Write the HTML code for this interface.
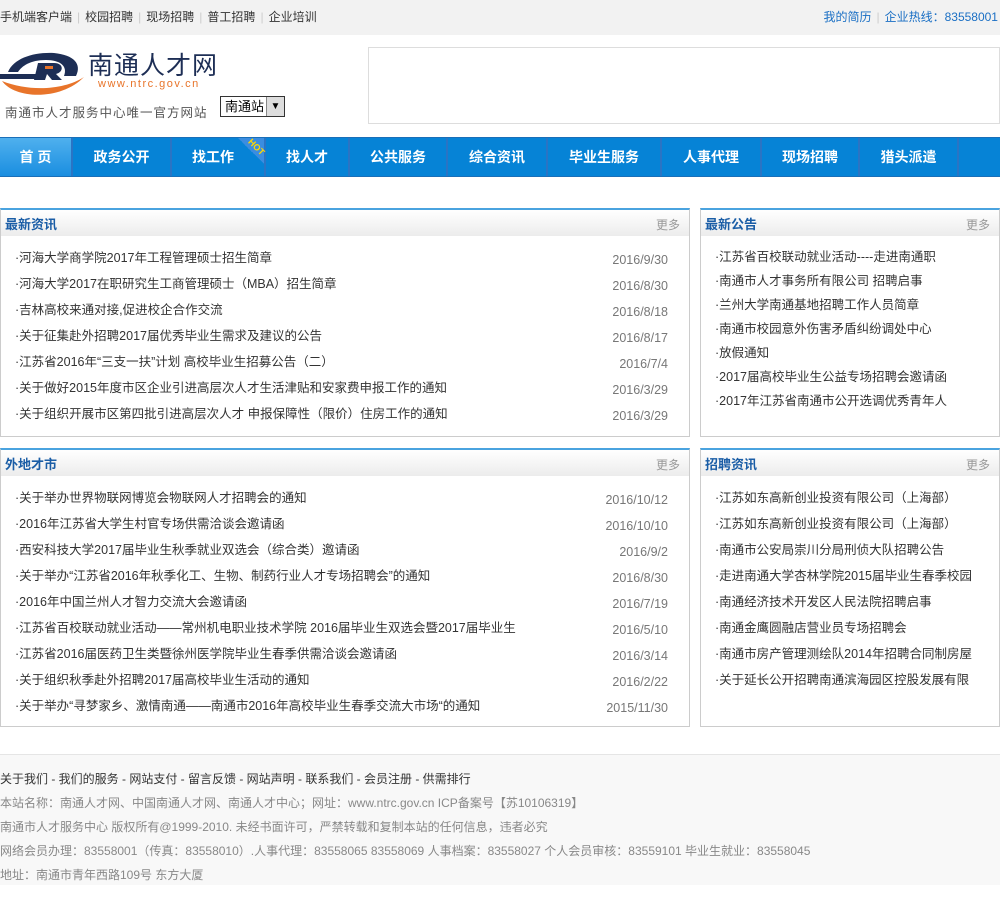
<!DOCTYPE html>
<html><head><meta charset="utf-8"><style>
*{margin:0;padding:0;box-sizing:border-box}
body{width:1000px;height:909px;background:#fff;font-family:"Liberation Sans","Noto Sans CJK SC",sans-serif;font-size:12px;color:#333;position:relative;overflow:hidden}
.a{position:absolute}
.top{left:0;top:0;width:1000px;height:35px;background:#f2f2f2;line-height:34px;font-size:12px;color:#333}
.top .s{color:#ccc;margin:0 5px}
.nav{left:0;top:137px;width:1000px;height:40px;background:#0683d6;border-top:1px solid #1a6fb8;border-bottom:1px solid #1a6fb8}
.nav div{position:absolute;top:0;height:38px;line-height:38px;text-align:center;color:#fff;font-weight:bold;font-size:14px;border-right:2px solid #2a74c4}
.box{border:1px solid #ccc;border-top:2px solid #4aa3df}
.hd{height:26px;background:linear-gradient(#fff,#ececec);line-height:30px;padding-left:4px;font-weight:bold;color:#1a5da6;font-size:13px;position:relative}
.hd span{position:absolute;right:9px;top:0;font-weight:normal;color:#999;font-size:12px}
ul{list-style:none}
li{height:26px;line-height:26px;padding-left:14px;position:relative;white-space:nowrap;overflow:hidden;font-size:12.5px}
li i{position:absolute;right:21px;top:2px;font-style:normal;color:#777}
.foot{left:0;top:754px;width:1000px;height:131px;background:#f8f8f8;border-top:1px solid #e5e5e5;color:#888;font-size:12px}
.foot p{height:24px;line-height:24px}
</style></head><body>
<div class="a top"><span style="margin-left:0">手机端客户端</span><span class="s">|</span>校园招聘<span class="s">|</span>现场招聘<span class="s">|</span>普工招聘<span class="s">|</span>企业培训
<span style="position:absolute;right:2px;top:0"><span style="color:#1a6fc4">我的简历</span><span class="s">|</span><span style="color:#1a6fc4">企业热线：83558001</span></span></div>

<svg class="a" style="left:0;top:50px" width="90" height="50" viewBox="0 0 90 50">
<path d="M8 22 C14 8 34 2 54 3 C74 5 82 14 76 26 L64 26 C68 16 60 10 46 10 C30 10 22 16 18 22 Z" fill="#1d2e55"/>
<path d="M0 24 L38 24 L36 29 L0 29Z" fill="#1d2e55"/>
<path d="M38 13 L54 13 C64 13 64 22 56 24 L62 30 L52 30 L47 24 L45 30 L34 30Z" fill="#1d2e55"/>
<rect x="45" y="16" width="8" height="3" fill="#e8742a"/>
<path d="M2 31 C16 50 62 50 84 27 C64 40 30 42 2 31Z" fill="#e8742a"/>
</svg>
<div class="a" style="left:88px;top:51px;font-size:25px;color:#1d2e55;letter-spacing:1px;line-height:30px">南通人才网</div>
<div class="a" style="left:98px;top:78px;font-size:11px;color:#e8742a;letter-spacing:1.5px">www.ntrc.gov.cn</div>
<div class="a" style="left:5px;top:102px;font-size:12.5px;color:#555;letter-spacing:1px">南通市人才服务中心唯一官方网站</div>
<div class="a" style="left:220px;top:96px;width:65px;height:21px;border:1px solid #333;background:#fff;font-size:13px;line-height:19px;padding-left:4px;color:#000">南通站<span style="position:absolute;right:0;top:0;width:18px;height:19px;background:#ddd;border-left:1px solid #888;text-align:center;font-size:10px">▼</span></div>
<div class="a" style="left:368px;top:47px;width:632px;height:77px;border:1px solid #ddd"></div>

<div class="a nav">
<div style="left:0;width:73px;background:linear-gradient(#4fb0ee,#1a8ee0)">首 页</div>
<div style="left:73px;width:99px">政务公开</div>
<div style="left:172px;width:94px;text-align:left;padding-left:20px">找工作<span style="position:absolute;right:0;top:0;width:26px;height:26px;background:linear-gradient(45deg,#0683d6 50%,#3b8de0 50%)"><b style="position:absolute;right:-2px;top:4px;transform:rotate(45deg);font-size:9px;line-height:10px;color:#ffd700">HOT</b></span></div>
<div style="left:266px;width:84px">找人才</div>
<div style="left:350px;width:98px">公共服务</div>
<div style="left:448px;width:100px">综合资讯</div>
<div style="left:548px;width:114px">毕业生服务</div>
<div style="left:662px;width:100px">人事代理</div>
<div style="left:762px;width:98px">现场招聘</div>
<div style="left:860px;width:99px">猎头派遣</div>
</div>

<div class="a box" style="left:0;top:208px;width:690px;height:229px">
<div class="hd">最新资讯<span>更多</span></div>
<ul style="margin-top:9px">
<li>·河海大学商学院2017年工程管理硕士招生简章<i>2016/9/30</i></li>
<li>·河海大学2017在职研究生工商管理硕士（MBA）招生简章<i>2016/8/30</i></li>
<li>·吉林高校来通对接,促进校企合作交流<i>2016/8/18</i></li>
<li>·关于征集赴外招聘2017届优秀毕业生需求及建议的公告<i>2016/8/17</i></li>
<li>·江苏省2016年“三支一扶”计划 高校毕业生招募公告（二）<i>2016/7/4</i></li>
<li>·关于做好2015年度市区企业引进高层次人才生活津贴和安家费申报工作的通知<i>2016/3/29</i></li>
<li>·关于组织开展市区第四批引进高层次人才 申报保障性（限价）住房工作的通知<i>2016/3/29</i></li>
</ul></div>

<div class="a box" style="left:700px;top:208px;width:300px;height:229px">
<div class="hd">最新公告<span>更多</span></div>
<ul style="margin-top:9px">
<li style="height:24px;line-height:24px">·江苏省百校联动就业活动----走进南通职</li>
<li style="height:24px;line-height:24px">·南通市人才事务所有限公司 招聘启事</li>
<li style="height:24px;line-height:24px">·兰州大学南通基地招聘工作人员简章</li>
<li style="height:24px;line-height:24px">·南通市校园意外伤害矛盾纠纷调处中心</li>
<li style="height:24px;line-height:24px">·放假通知</li>
<li style="height:24px;line-height:24px">·2017届高校毕业生公益专场招聘会邀请函</li>
<li style="height:24px;line-height:24px">·2017年江苏省南通市公开选调优秀青年人</li>
</ul></div>

<div class="a box" style="left:0;top:448px;width:690px;height:279px">
<div class="hd">外地才市<span>更多</span></div>
<ul style="margin-top:9px">
<li>·关于举办世界物联网博览会物联网人才招聘会的通知<i>2016/10/12</i></li>
<li>·2016年江苏省大学生村官专场供需洽谈会邀请函<i>2016/10/10</i></li>
<li>·西安科技大学2017届毕业生秋季就业双选会（综合类）邀请函<i>2016/9/2</i></li>
<li>·关于举办“江苏省2016年秋季化工、生物、制药行业人才专场招聘会”的通知<i>2016/8/30</i></li>
<li>·2016年中国兰州人才智力交流大会邀请函<i>2016/7/19</i></li>
<li>·江苏省百校联动就业活动——常州机电职业技术学院 2016届毕业生双选会暨2017届毕业生<i style="background:#fff;padding-left:40px">2016/5/10</i></li>
<li>·江苏省2016届医药卫生类暨徐州医学院毕业生春季供需洽谈会邀请函<i>2016/3/14</i></li>
<li>·关于组织秋季赴外招聘2017届高校毕业生活动的通知<i>2016/2/22</i></li>
<li>·关于举办“寻梦家乡、激情南通——南通市2016年高校毕业生春季交流大市场“的通知<i>2015/11/30</i></li>
</ul></div>

<div class="a box" style="left:700px;top:448px;width:300px;height:279px">
<div class="hd">招聘资讯<span>更多</span></div>
<ul style="margin-top:9px">
<li>·江苏如东高新创业投资有限公司（上海部）</li>
<li>·江苏如东高新创业投资有限公司（上海部）</li>
<li>·南通市公安局崇川分局刑侦大队招聘公告</li>
<li>·走进南通大学杏林学院2015届毕业生春季校园</li>
<li>·南通经济技术开发区人民法院招聘启事</li>
<li>·南通金鹰圆融店营业员专场招聘会</li>
<li>·南通市房产管理测绘队2014年招聘合同制房屋</li>
<li>·关于延长公开招聘南通滨海园区控股发展有限</li>
</ul></div>

<div class="a foot"><div style="padding-top:12px">
<p style="color:#333">关于我们 - 我们的服务 - 网站支付 - 留言反馈 - 网站声明 - 联系我们 - 会员注册 - 供需排行</p>
<p>本站名称：南通人才网、中国南通人才网、南通人才中心；网址：www.ntrc.gov.cn ICP备案号【苏10106319】</p>
<p>南通市人才服务中心 版权所有@1999-2010. 未经书面许可，严禁转载和复制本站的任何信息，违者必究</p>
<p>网络会员办理：83558001（传真：83558010）.人事代理：83558065 83558069 人事档案：83558027 个人会员审核：83559101 毕业生就业：83558045</p>
<p>地址：南通市青年西路109号 东方大厦</p>
</div></div>
</body></html>
